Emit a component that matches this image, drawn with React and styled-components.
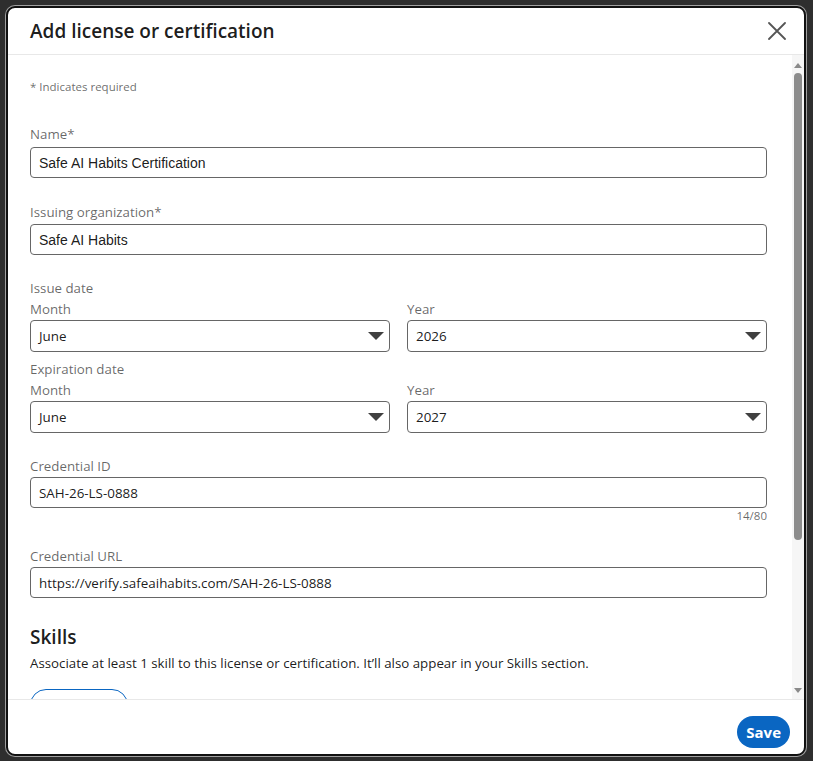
import styled, { createGlobalStyle } from "styled-components";

const GlobalStyle = createGlobalStyle`
  html, body {
    margin: 0;
    padding: 0;
  }
  body {
    background: #2e2e2e;
    font-family: "Open Sans", "Noto Sans", sans-serif;
  }
`;

function CloseIcon() {
  return (
    <svg width="18" height="18" viewBox="0 0 18 18">
      <path d="M1 1 L17 17 M17 1 L1 17" stroke="#555" strokeWidth="1.8" strokeLinecap="round" />
    </svg>
  );
}

function Caret() {
  return (
    <svg width="16" height="8" viewBox="0 0 16 8">
      <polygon points="0,0 16,0 8,8" fill="#404040" />
    </svg>
  );
}

function App() {
  return (
    <>
      <GlobalStyle />
      <Page>
        <Modal>
          <Header>
            <Title>Add license or certification</Title>
            <Close aria-label="Dismiss">
              <CloseIcon />
            </Close>
          </Header>

          <Body>
            <Content>
              <Required>* Indicates required</Required>

              <Field $top={29}>
                <Label>Name*</Label>
                <Input $gap={3} $arial>Safe AI Habits Certification</Input>
              </Field>

              <Field $top={24}>
                <Label>Issuing organization*</Label>
                <Input $gap={2} $arial>Safe AI Habits</Input>
              </Field>

              <Field $top={23}>
                <Label>Issue date</Label>
                <DateRow>
                  <div>
                    <Label $top={1}>Month</Label>
                    <SelectBox>
                      <span>June</span>
                      <Caret />
                    </SelectBox>
                  </div>
                  <div>
                    <Label $top={1}>Year</Label>
                    <SelectBox>
                      <span>2026</span>
                      <Caret />
                    </SelectBox>
                  </div>
                </DateRow>
              </Field>

              <Field $top={7}>
                <Label>Expiration date</Label>
                <DateRow>
                  <div>
                    <Label $top={1}>Month</Label>
                    <SelectBox>
                      <span>June</span>
                      <Caret />
                    </SelectBox>
                  </div>
                  <div>
                    <Label $top={1}>Year</Label>
                    <SelectBox>
                      <span>2027</span>
                      <Caret />
                    </SelectBox>
                  </div>
                </DateRow>
              </Field>

              <Field $top={23}>
                <Label>Credential ID</Label>
                <Input $gap={1}>SAH-26-LS-0888</Input>
                <Counter>14/80</Counter>
              </Field>

              <Field $top={22}>
                <Label>Credential URL</Label>
                <Input $gap={1}>https://verify.safeaihabits.com/SAH-26-LS-0888</Input>
              </Field>

              <Section>Skills</Section>
              <Description>
                Associate at least 1 skill to this license or certification. It’ll also appear in your Skills section.
              </Description>
              <AddSkill aria-label="Add skill" />
            </Content>

            <Scrollbar>
              <Arrow $up />
              <Thumb />
              <Spacer />
              <Arrow />
            </Scrollbar>
          </Body>

          <Footer>
            <SaveButton>Save</SaveButton>
          </Footer>
        </Modal>
      </Page>
    </>
  );
}

const Page = styled.div`
  width: 813px;
  height: 761px;
  box-sizing: border-box;
  padding: 6px 7px 5px 6px;
  background: #2e2e2e;
  overflow: hidden;
`;

const Modal = styled.div`
  width: 800px;
  height: 750px;
  box-sizing: border-box;
  border: 2px solid #111;
  border-radius: 9px;
  box-shadow: 0 0 0 1px #a0a0a0;
  background: #fff;
  display: flex;
  flex-direction: column;
  overflow: hidden;
`;

const Header = styled.div`
  flex: none;
  height: 47px;
  box-sizing: border-box;
  border-bottom: 1px solid #e8e8e8;
  display: flex;
  align-items: center;
  justify-content: space-between;
  padding-left: 22px;
  padding-right: 15px;
`;

const Title = styled.h2`
  margin: 0 0 1px;
  font-size: 19px;
  font-weight: 600;
  color: rgba(0, 0, 0, 0.9);
`;

const Close = styled.button`
  width: 24px;
  height: 24px;
  padding: 0;
  border: none;
  background: none;
  display: flex;
  align-items: center;
  justify-content: center;
`;

const Body = styled.div`
  flex: 1;
  min-height: 0;
  display: flex;
`;

const Content = styled.div`
  flex: 1;
  overflow: hidden;
  padding: 24px 25px 0 22px;
`;

const Required = styled.div`
  font-size: 11.5px;
  line-height: 16px;
  color: rgba(0, 0, 0, 0.6);
`;

const Field = styled.div`
  margin-top: ${(p) => p.$top}px;
`;

const Label = styled.div`
  margin-top: ${(p) => p.$top || 0}px;
  font-size: 13.3px;
  line-height: 20px;
  color: rgba(0, 0, 0, 0.6);
`;

const Input = styled.div`
  margin-top: ${(p) => p.$gap}px;
  height: 31px;
  box-sizing: border-box;
  border: 1px solid #666;
  border-radius: 4px;
  padding: 0 8px;
  display: flex;
  align-items: center;
  font-family: ${(p) => (p.$arial ? '"Liberation Sans", Arial, sans-serif' : 'inherit')};
  font-size: ${(p) => (p.$arial ? 14 : 13.4)}px;
  color: rgba(0, 0, 0, 0.9);
`;

const DateRow = styled.div`
  display: grid;
  grid-template-columns: 1fr 1fr;
  column-gap: 17px;
`;

const SelectBox = styled.div`
  margin-top: 1px;
  height: 32px;
  box-sizing: border-box;
  border: 1px solid #666;
  border-radius: 4px;
  padding: 0 5px 0 8px;
  display: flex;
  align-items: center;
  justify-content: space-between;
  font-size: 13.4px;
  color: rgba(0, 0, 0, 0.9);
`;

const Counter = styled.div`
  text-align: right;
  font-size: 11.5px;
  line-height: 16px;
  color: rgba(0, 0, 0, 0.6);
`;

const Section = styled.h3`
  margin: 27px 0 0;
  font-size: 19px;
  line-height: 24px;
  font-weight: 600;
  color: rgba(0, 0, 0, 0.9);
`;

const Description = styled.p`
  margin: 4px 0 0;
  font-size: 13.3px;
  line-height: 20px;
  color: rgba(0, 0, 0, 0.9);
`;

const AddSkill = styled.button`
  display: block;
  margin-top: 16px;
  width: 98px;
  height: 32px;
  border: 1px solid #0a66c2;
  border-radius: 16px;
  background: #fff;
`;

const Scrollbar = styled.div`
  flex: none;
  width: 12px;
  background: #f6f6f6;
  display: flex;
  flex-direction: column;
  align-items: center;
  padding: 8px 0 6px;
  box-sizing: border-box;
`;

const Arrow = styled.div`
  width: 0;
  height: 0;
  border-left: 4px solid transparent;
  border-right: 4px solid transparent;
  ${(p) => (p.$up ? "border-bottom: 5px solid #8a8a8a;" : "border-top: 5px solid #8a8a8a;")}
`;

const Thumb = styled.div`
  margin-top: 5px;
  width: 8px;
  height: 467px;
  border-radius: 4px;
  background: #8c8c8c;
`;

const Spacer = styled.div`
  flex: 1;
`;

const Footer = styled.div`
  flex: none;
  height: 55px;
  box-sizing: border-box;
  border-top: 1px solid #e8e8e8;
  display: flex;
  justify-content: flex-end;
  align-items: flex-start;
  padding: 16px 14px 0 0;
`;

const SaveButton = styled.button`
  height: 32px;
  padding: 0 9px;
  border: none;
  border-radius: 16px;
  background: #0a66c2;
  color: #fff;
  font-family: inherit;
  font-size: 15px;
  font-weight: 700;
`;

export default App;
